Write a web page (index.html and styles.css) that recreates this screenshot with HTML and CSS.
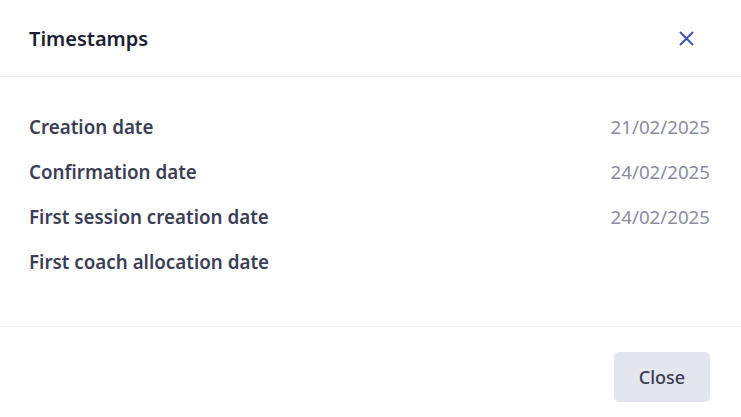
FILE: index.html
```html
<!DOCTYPE html>
<html>
<head>
<meta charset="utf-8">
<link rel="stylesheet" href="styles.css">
</head>
<body>
<div class="modal">
  <div class="modal-header">
    <h2 class="modal-title">Timestamps</h2>
    <button class="icon-btn" aria-label="Close">
      <svg width="15" height="15" viewBox="0 0 15 15"><path d="M1.5 1.5L13.5 13.5M13.5 1.5L1.5 13.5" stroke="#4353b3" stroke-width="2" stroke-linecap="round" fill="none"/></svg>
    </button>
  </div>
  <div class="modal-body">
    <div class="row"><span class="label">Creation date</span><span class="value">21/02/2025</span></div>
    <div class="row"><span class="label">Confirmation date</span><span class="value">24/02/2025</span></div>
    <div class="row"><span class="label">First session creation date</span><span class="value">24/02/2025</span></div>
    <div class="row"><span class="label">First coach allocation date</span><span class="value"></span></div>
  </div>
  <div class="modal-footer">
    <button class="btn">Close</button>
  </div>
</div>
</body>
</html>
```
FILE: styles.css
```css
* { box-sizing: border-box; }
html, body { margin: 0; padding: 0; background: #fff; }
body { font-family: "Noto Sans", "Open Sans", sans-serif; }
.modal { width: 741px; height: 417px; display: flex; flex-direction: column; }
.modal-header {
  height: 77px;
  display: flex; align-items: center; justify-content: space-between;
  padding: 0 47px 0 29px;
  border-bottom: 1px solid #eceef2;
}
.modal-title { margin: 0; font-size: 20px; font-weight: 600; color: #1c1e33; }
.icon-btn { border: 0; background: none; padding: 0; width: 15px; height: 15px; display: flex; cursor: pointer; }
.modal-body { padding: 27px 31px 42px 29px; border-bottom: 1px solid #eceef2; }
.row { height: 45px; display: flex; align-items: center; justify-content: space-between; }
.label { font-size: 18.8px; font-weight: 600; color: #3c3e55; }
.value { font-size: 18.7px; color: #8a8d9e; }
.modal-footer { flex: 1; display: flex; justify-content: flex-end; align-items: flex-start; padding: 25px 31px 0 0; }
.btn {
  width: 96px; height: 50px; border: 0; border-radius: 5px;
  background: #e3e6ef; color: #3a3c52;
  font-family: inherit; font-size: 18px; font-weight: 500;
}
```
